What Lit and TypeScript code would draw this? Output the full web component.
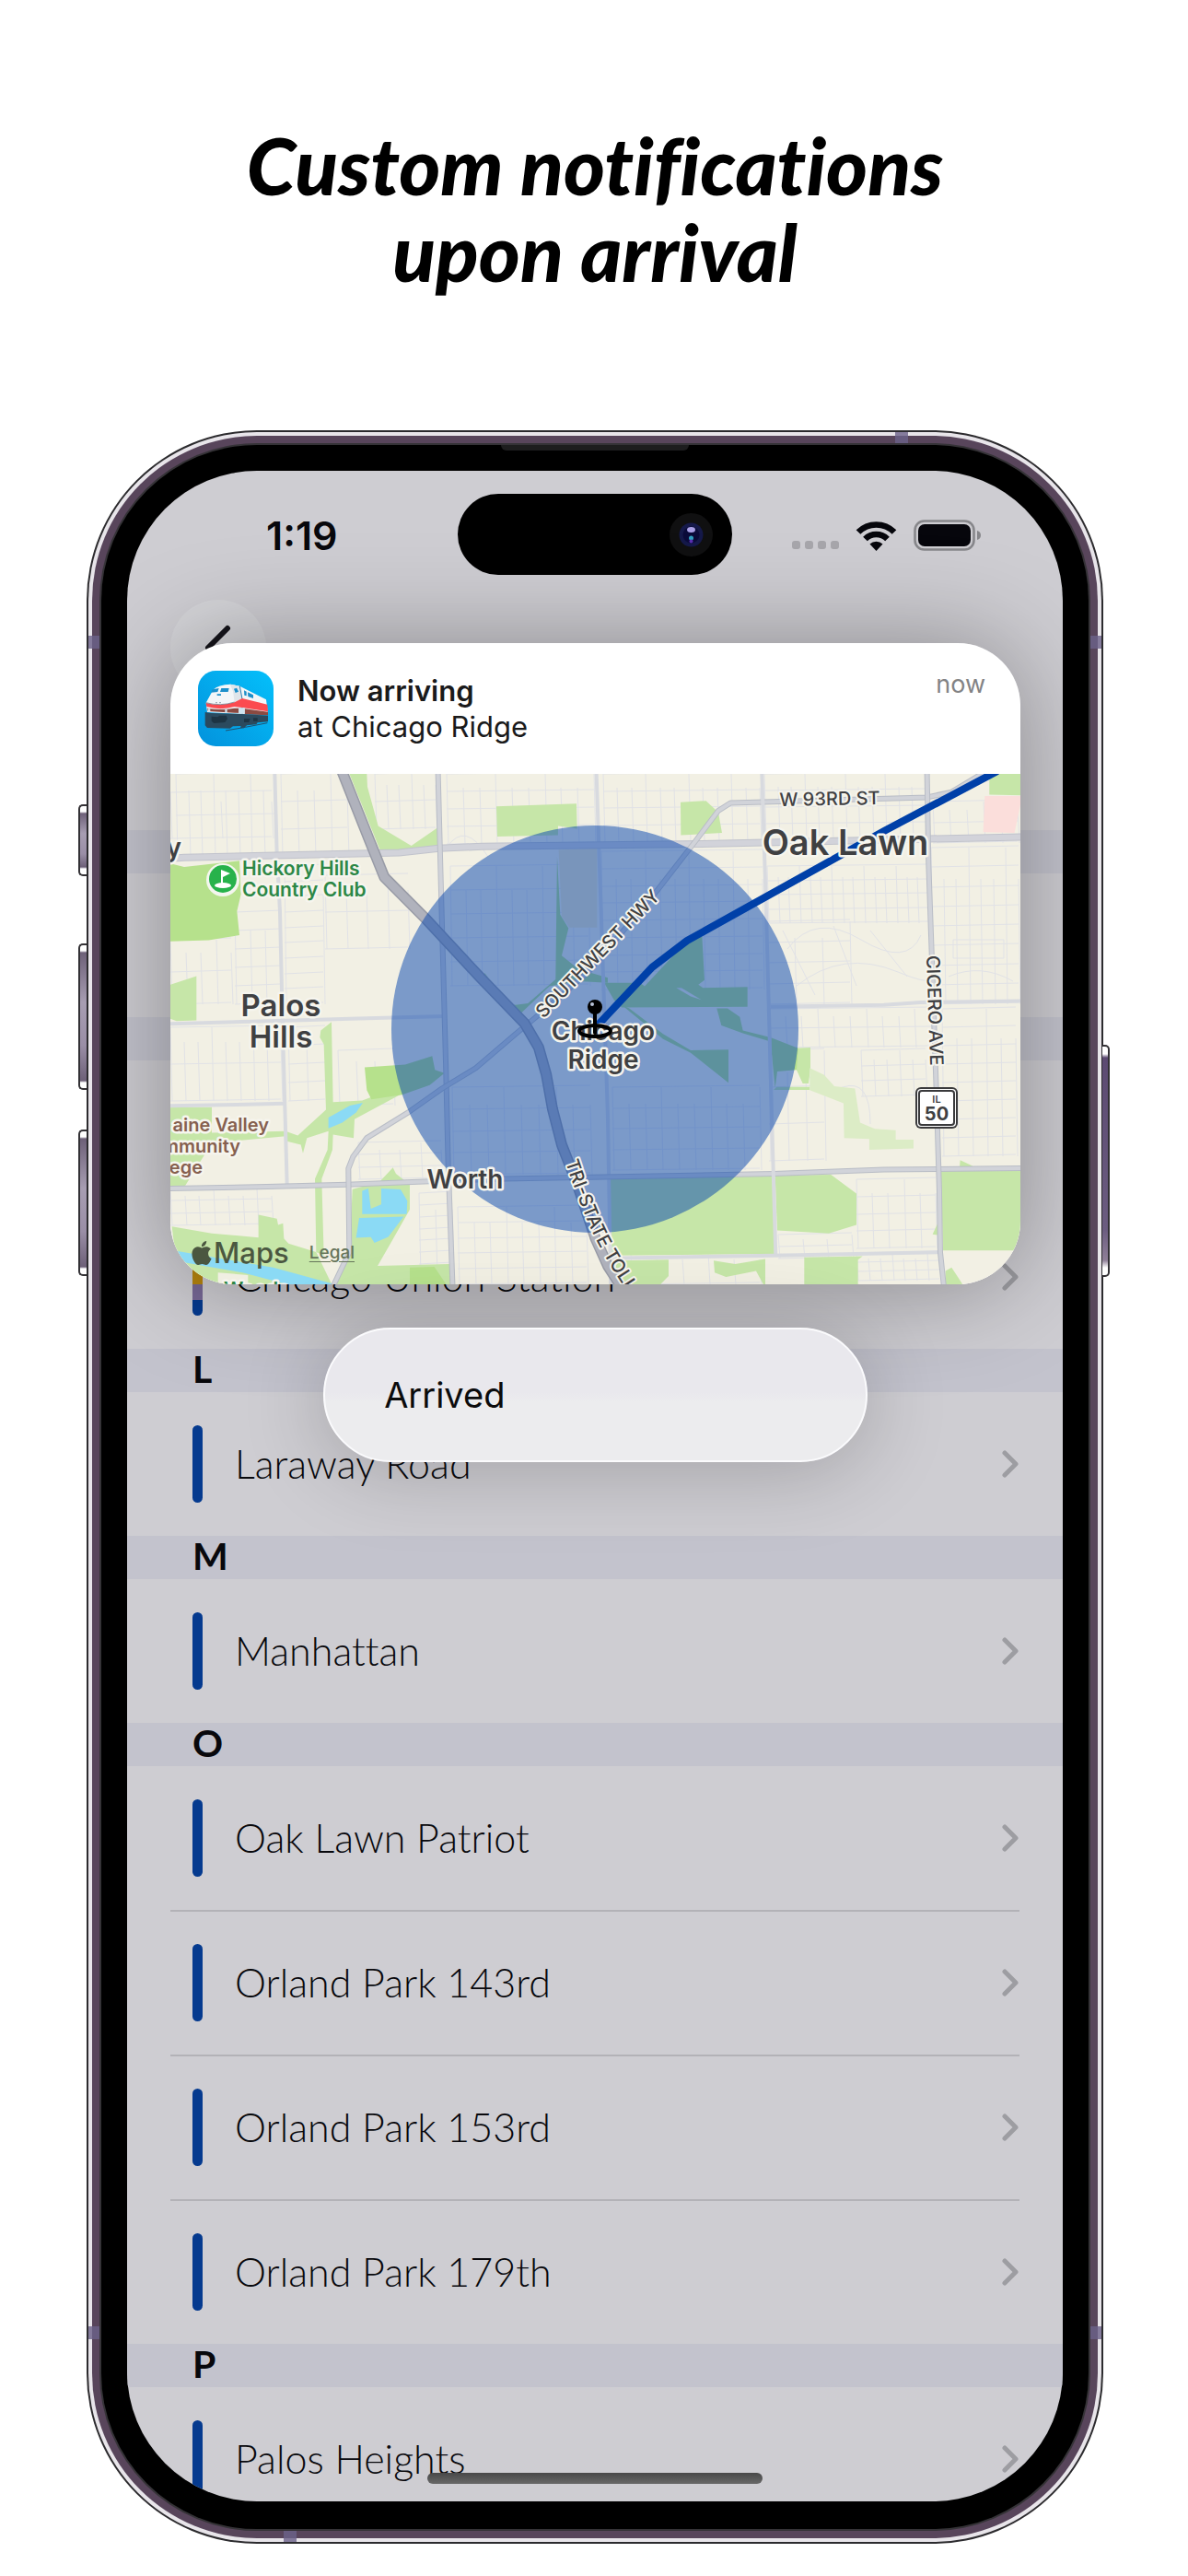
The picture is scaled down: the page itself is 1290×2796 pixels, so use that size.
import { LitElement, html, svg, css } from "lit";
import { customElement, property } from "lit/decorators.js";

interface Station {
  name: string;
  lines: string[];
}

interface Section {
  letter: string;
  stations: Station[];
}

const BLUE = "#053a8f";

const SECTIONS: Section[] = [
  { letter: "", stations: [{ name: "", lines: [BLUE] }] },
  {
    letter: "",
    stations: [
      { name: "", lines: [BLUE] },
      { name: "Chicago Union Station", lines: ["#b8860f", "#b8860f", "#b8860f", "#776896", BLUE] },
    ],
  },
  { letter: "L", stations: [{ name: "Laraway Road", lines: [BLUE] }] },
  { letter: "M", stations: [{ name: "Manhattan", lines: [BLUE] }] },
  {
    letter: "O",
    stations: [
      { name: "Oak Lawn Patriot", lines: [BLUE] },
      { name: "Orland Park 143rd", lines: [BLUE] },
      { name: "Orland Park 153rd", lines: [BLUE] },
      { name: "Orland Park 179th", lines: [BLUE] },
    ],
  },
  { letter: "P", stations: [{ name: "Palos Heights", lines: [BLUE] }] },
];

/* Residential streets: each block is [x, y, width, height, columns, rows]. */
const BLOCKS: number[][] = [
  [6, 0, 108, 90, 8, 2], [120, 0, 72, 90, 4, 3], [222, 0, 66, 60, 5, 2], [300, 0, 160, 76, 9, 4],
  [70, 150, 50, 100, 3, 5], [124, 100, 42, 150, 1, 9], [168, 110, 90, 80, 4, 2], [0, 180, 66, 70, 4, 2],
  [0, 275, 120, 80, 8, 2], [128, 275, 40, 80, 2, 4], [182, 300, 60, 60, 3, 1], [0, 450, 110, 40, 7, 3],
  [204, 400, 90, 40, 4, 3], [270, 455, 36, 90, 2, 7], [312, 470, 140, 84, 8, 5],
  [304, 100, 150, 130, 9, 5], [306, 340, 150, 95, 8, 4], [470, 0, 170, 74, 11, 4], [645, 0, 175, 72, 12, 4],
  [828, 30, 92, 45, 5, 2], [468, 84, 175, 150, 11, 8], [648, 100, 175, 62, 15, 4], [826, 80, 95, 170, 7, 8],
  [648, 160, 90, 90, 3, 4], [480, 340, 160, 90, 9, 4], [650, 255, 176, 42, 10, 2], [838, 255, 80, 160, 5, 8],
  [650, 300, 60, 120, 3, 3], [750, 300, 70, 50, 5, 3], [745, 440, 86, 75, 5, 4], [660, 500, 80, 26, 3, 2],
  [745, 520, 90, 30, 7, 3], [500, 520, 140, 34, 5, 1], [0, 20, 110, 50, 2, 1],
];

const streets = BLOCKS.map(([x, y, w, h, cols, rows]) => {
  let d = "";
  for (let i = 0; i <= cols; i++) {
    const px = Math.round(x + (w * i) / cols);
    const cut = (i * 7) % 3 === 0 ? 0 : Math.round(h / 5);
    d += `M${px} ${y + cut}L${px + 2} ${y + h}`;
  }
  for (let j = 0; j <= rows; j++) {
    const py = Math.round(y + (h * j) / rows);
    d += `M${x} ${py}L${x + w} ${py - 2}`;
  }
  return d;
}).join("");

const chevron = html`<svg class="chev" viewBox="0 0 18 30" aria-hidden="true">
  <path d="M3 3L15 15L3 27" fill="none" stroke="#9d9da2" stroke-width="5" stroke-linecap="round" stroke-linejoin="round" />
</svg>`;

@customElement("station-row")
class StationRow extends LitElement {
  @property({ attribute: false }) station!: Station;

  static styles = css`
    :host { display: block; }
    .row {
      display: flex; align-items: center; height: 156px; padding: 0 48px 0 71px;
      color: #08080c; text-decoration: none; font-variant-ligatures: none;
      font: 300 43px/52px Lato, "Liberation Sans", sans-serif;
    }
    .bar { display: flex; flex-direction: column; width: 11px; height: 84px; border-radius: 6px; overflow: hidden; margin-right: 35px; }
    .bar i { flex: 1; }
    .name { flex: 1; font-variant-ligatures: none; }
    .chev { width: 18px; height: 30px; }
  `;

  render() {
    return html`<a class="row" href="#">
      <span class="bar">${this.station.lines.map((c) => html`<i style="background:${c}"></i>`)}</span>
      <span class="name">${this.station.name}</span>
      ${chevron}
    </a>`;
  }
}

@customElement("arrival-map")
class ArrivalMap extends LitElement {
  static styles = css`
    :host { display: block; position: relative; overflow: hidden; }
    .map { display: block; width: 100%; height: auto; background: #f2f0e4; }
    .g path { fill: #c6e6a8; }
    .d path { fill: #b6e18c; }
    .w path { fill: #8bdaf5; }
    .road path, .street, .hwy path { fill: none; vector-effect: non-scaling-stroke; stroke-linejoin: round; }
    .street { stroke: #e1e2e6; stroke-width: 1px; }
    .road path { stroke: #d8dadf; stroke-width: 4px; }
    .road .main { stroke: #b9bdc6; stroke-width: 6px; }
    .road .fill { stroke: #d1d3d9; stroke-width: 4px; }
    .road .wide { stroke: #c1c3cc; stroke-width: 8px; }
    .road .widefill { stroke: #d2d3da; stroke-width: 6px; }
    .hwy .edge { stroke: #989ba6; stroke-width: 12px; }
    .hwy .core { stroke: #b0b2bc; stroke-width: 9px; }
    .route { fill: none; stroke: #0040a8; stroke-width: 8px; stroke-linejoin: round; }
    text {
      font-family: Inter, "Liberation Sans", sans-serif; fill: #3f4042; stroke: #f6f5ee;
      stroke-width: 5px; paint-order: stroke; stroke-linejoin: round;
    }
    .city { font-size: 38px; font-weight: 600; }
    .town { font-size: 33px; font-weight: 600; }
    .village { font-size: 28px; font-weight: 600; }
    .club { font-size: 21px; font-weight: 600; fill: #2c8746; }
    .school { font-size: 20px; font-weight: 600; fill: #86604f; }
    .way { font-size: 20px; font-weight: 500; stroke-width: 4px; }
    .mid { text-anchor: middle; }
    .end { text-anchor: end; }
    .il { font-size: 11px; font-weight: 600; stroke: none; }
    .num { font-size: 20px; font-weight: 700; stroke: none; }
    .credit {
      position: absolute; left: 23px; bottom: 16px; display: flex; align-items: center;
      font: 500 31px/36px Inter, "Liberation Sans", sans-serif; color: #4b5740;
    }
    .apple { width: 22px; height: 26px; margin-right: 2px; fill: #4b5740; }
    .legal { font-size: 19px; font-weight: 500; color: #66755a; margin-left: 22px; text-underline-offset: 3px; }
  `;

  render() {
    return html`
      <svg class="map" viewBox="0 0 923 554" role="img" aria-label="Map">
        <path class="street" d=${streets} />
        <path class="street" d="M670 190Q700 150 750 180T815 175M680 230Q730 190 790 215T820 200M665 170L700 240M720 165L745 230M760 170L800 220M850 180H905V200H850ZM845 220Q880 205 915 225M690 320Q700 350 730 340T760 380M300 80Q320 50 345 90" />
        <g transform="translate(-5 -10) scale(.3333 .37)">
          <g class="g">
            <path d="M598 26H655L657 65L692 180L800 238L885 185L890 245L700 255Z" />
            <path d="M1077 122L1338 114L1340 188L1278 180V207L1080 211Z" />
            <path d="M15 645L100 620V750L35 752L15 745Z" />
            <path d="M15 1005H150V1080L390 1075L430 1088L522 1012L515 820L502 800L505 780L540 755L545 990L640 985L670 975L660 960L770 965L615 1040L612 1095L545 1085L543 1130L508 1215L515 1440L490 1430L486 1215L527 1130L530 1075L460 1095L447 1140L440 1115L395 1105L390 1090L150 1110L60 1240H15Z" />
            <path d="M20 1355L150 1375L302 1387V1320L362 1332L366 1350L382 1345L385 1390L400 1405L490 1430L540 1523V1540H100L30 1430Z" />
            <path d="M608 1245L695 1225L740 1182L750 1200L795 1232V1305L735 1400L690 1470L925 1465L930 1540H540L600 1420Z" />
          </g>
          <g class="d">
            <path d="M15 290L60 300L240 282L245 380L232 430L240 500L140 515L15 518Z" />
            <path d="M648 888L780 880L868 855L877 895L908 905L860 940L770 968L670 982L655 955Z" />
            <path d="M1275 270L1285 440L1312 480L1290 560L1345 600L1440 625V640L1345 635L1250 650L1150 735L1105 700L1140 705L1180 700L1270 630Z" />
            <path d="M1025 615L1040 612L1110 700L1100 712Z" />
            <path d="M795 1475L875 1473L925 1540H795Z" />
          </g>
          <path d="M1280 250L1405 245V478H1315L1290 445Z" fill="#efe7c8" />
          <g class="w">
            <path d="M530 1035L600 1000L642 992L620 1020L575 1050L530 1067Z" />
            <path d="M640 1250L660 1243L668 1303L702 1290V1243L765 1246L787 1280L785 1318H640Z" />
            <path d="M630 1330L775 1326L725 1385L680 1403L668 1386L620 1388Z" />
            <path d="M30 1426L200 1452L350 1475L545 1523L540 1535H440L250 1490L60 1460Z" />
          </g>
          <path d="M170 1490L268 1497V1540H170Z" fill="#f0efe2" />
        </g>
        <g transform="translate(455 -10) scale(.3333 .37)">
          <g class="g">
            <path d="M297 110L380 106L420 140L432 200L298 207Z" />
            <path d="M1303 26H1410V90L1303 88Z" />
            <path d="M670 832L720 830L720 890L714 935H695L675 895Z" />
            <path d="M65 1210L598 1205L605 1435L70 1440Z" />
            <path d="M605 1205L787 1203L870 1258V1350L780 1375L612 1366Z" />
            <path d="M1145 1192L1410 1190V1425H1152Z" />
            <path d="M1208 1160L1250 1178L1206 1182Z" />
            <path d="M1135 1345L1118 1378L1137 1380Z" />
            <path d="M90 1455L258 1452V1500L220 1535H75Z" />
            <path d="M405 1455L475 1465L573 1450V1535L543 1485L445 1503L408 1490Z" />
            <path d="M700 1445L890 1442L875 1452V1540H700Z" />
            <path d="M1160 1485L1180 1475L1220 1530H1160Z" />
            <path d="M610 945H718V954H600Z" />
          </g>
          <g class="d">
            <path d="M175 655L320 515L367 503L375 632L355 645L370 655L515 652V710L105 712L80 690L48 640L165 640L180 650L250 637L330 680L365 690L300 655Z" />
            <path d="M415 715L450 715L490 740L500 780L590 800L680 832L675 895L612 900L605 948L590 812L500 788L430 765Z" />
            <path d="M130 715L240 790L330 838L453 836V933L330 845L240 805L105 705Z" />
          </g>
          <path d="M1288 92H1410L1385 200L1283 198Z" fill="#fbdedb" />
          <path d="M718 890L765 910L798 943L865 950L882 1050L930 1068L998 1072V1100H1056V1126L912 1130V1098L830 1095L828 993L718 955Z" fill="#dcecc6" />
        </g>
        <g class="road">
          <g transform="translate(-5 -10) scale(.3333 .37)">
            <path d="M355 26L362 260L372 430L380 740L395 1230" />
            <path d="M15 760L420 750L600 745L910 738" />
            <path d="M15 1001L230 997L385 994" />
            <path d="M1403 26L1420 480L1440 1030L1450 1540" />
            <path class="wide" d="M10 275L60 272L560 262L760 258L890 245L1030 240L1780 232L2260 222L2790 212" />
            <path class="widefill" d="M10 275L60 272L560 262L760 258L890 245L1030 240L1780 232L2260 222L2790 212" />
            <path class="main" d="M887 26L900 470L913 900L920 1170L935 1540" />
            <path class="fill" d="M887 26L900 470L913 900L920 1170L935 1540" />
            <path class="main" d="M10 1243L330 1238L590 1232L860 1222L1100 1215L1980 1200L2340 1188L2790 1184" />
            <path class="fill" d="M10 1243L330 1238L590 1232L860 1222L1100 1215L1980 1200L2340 1188L2790 1184" />
            <path class="main" d="M540 1540L598 1430L595 1185L610 1150L655 1095L790 1020L900 950L1010 890L1140 790L1260 700L1380 605L1600 370L1725 225L1800 135L1840 112L2480 96L2560 80L2660 26" />
            <path class="fill" d="M540 1540L598 1430L595 1185L610 1150L655 1095L790 1020L900 950L1010 890L1140 790L1260 700L1380 605L1600 370L1725 225L1800 135L1840 112L2480 96L2560 80L2660 26" />
          </g>
          <g transform="translate(455 -10) scale(.3333 .37)">
            <path d="M562 26L575 400L595 1060L607 1440" />
            <path d="M590 710L960 705L1080 697L1410 693" />
            <path d="M60 1448L600 1440L1143 1430" />
            <path class="main" d="M1100 26L1105 290L1117 600L1130 950L1140 1250L1143 1430L1156 1540" />
            <path class="fill" d="M1100 26L1105 290L1117 600L1130 950L1140 1250L1143 1430L1156 1540" />
          </g>
        </g>
        <g class="hwy" transform="translate(-5 -10) scale(.3333 .37)">
          <path class="edge" d="M570 10L665 225L712 330L850 455L1020 620L1170 760L1215 830L1240 910L1260 1010L1290 1115L1340 1230L1400 1390L1440 1470L1490 1540" />
          <path class="core" d="M570 10L665 225L712 330L850 455L1020 620L1170 760L1215 830L1240 910L1260 1010L1290 1115L1340 1230L1400 1390L1440 1470L1490 1540" />
        </g>
        <circle cx="461" cy="277" r="221" fill="#0443ad" fill-opacity=".5" />
        <path class="route" d="M461 276L523 210L561 181L775 62L898 -3" />

        <text class="city mid" x="733" y="88">Oak Lawn</text>
        <text class="town mid" x="120" y="263">Palos</text>
        <text class="town mid" x="120" y="297">Hills</text>
        <text class="village mid" x="470" y="289">Chicago</text>
        <text class="village mid" x="470" y="320">Ridge</text>
        <text class="village mid" x="320" y="450">Worth</text>
        <text class="village end" x="12" y="90">y</text>
        <text class="club" x="78" y="110">Hickory Hills</text>
        <text class="club" x="78" y="133">Country Club</text>
        <text class="club" x="58" y="567">Woods</text>
        <text class="school end" x="107" y="388">aine Valley</text>
        <text class="school end" x="76" y="411">mmunity</text>
        <text class="school end" x="35" y="434">ege</text>
        <text class="way mid" transform="translate(716 34) rotate(-1)">W 93RD ST</text>
        <text class="way mid" transform="translate(823 257) rotate(88)">CICERO AVE</text>
        <text class="way mid" transform="translate(469 200) rotate(-46)">SOUTHWEST HWY</text>
        <path id="tri" d="M429 421Q440 455 455 490T505 575" fill="none" />
        <text class="way"><textPath href="#tri">TRI-STATE TOLL</textPath></text>

        <circle cx="57" cy="115" r="18" fill="#f4f6ee" />
        <circle cx="57" cy="114" r="15" fill="#27b24b" />
        <path d="M55 104L65 108L57 112V120H55Z" fill="#fff" />
        <ellipse cx="57" cy="121" rx="9" ry="3" fill="#fff" />

        <rect x="809" y="340" width="46" height="45" rx="6" fill="#3a3a3c" />
        <rect x="811" y="342" width="42" height="41" rx="4" fill="#fff" />
        <rect x="813" y="344" width="38" height="37" rx="3" fill="none" stroke="#3a3a3c" stroke-width="2" />
        <text class="il mid" x="832" y="357">IL</text>
        <text class="num mid" x="832" y="376">50</text>

        <ellipse cx="461" cy="279" rx="17" ry="6" fill="none" stroke="#000" stroke-width="4" />
        <path d="M461 254V281" stroke="#000" stroke-width="4" stroke-linecap="round" />
        <circle cx="461" cy="253" r="8" fill="#000" />
        <circle cx="458" cy="250" r="2" fill="#b9c3d8" />
      </svg>
      <div class="credit">
        <svg class="apple" viewBox="2 0 20 24" aria-hidden="true"><path d="M12.152 6.896c-.948 0-2.415-1.078-3.96-1.04-2.04.027-3.91 1.183-4.961 3.014-2.117 3.675-.546 9.103 1.519 12.09 1.013 1.454 2.208 3.09 3.792 3.039 1.52-.065 2.09-.987 3.935-.987 1.831 0 2.35.987 3.96.948 1.637-.026 2.676-1.48 3.676-2.948 1.156-1.688 1.636-3.325 1.662-3.415-.039-.013-3.182-1.221-3.22-4.857-.026-3.04 2.48-4.494 2.597-4.559-1.429-2.09-3.623-2.324-4.39-2.376-2-.156-3.675 1.09-4.61 1.09zM15.53 3.83c.843-1.012 1.4-2.427 1.245-3.83-1.207.052-2.662.805-3.532 1.818-.78.896-1.454 2.338-1.273 3.714 1.338.104 2.715-.688 3.559-1.701" /></svg>
        <span>Maps</span>
        <a class="legal" href="#">Legal</a>
      </div>
    `;
  }
}

@customElement("app-root")
class AppRoot extends LitElement {
  static styles = css`
    :host { display: block; background: #fff; font-family: Inter, "Liberation Sans", sans-serif; }
    .page { padding: 132px 108px 51px 110px; overflow: hidden; }
    h1 {
      margin: 0 0 163px; text-align: center; color: #000;
      font: italic 900 86px/94px Lato, "Open Sans", sans-serif; font-variant-ligatures: none;
    }

    .phone {
      position: relative; background: #000; border-radius: 169px; padding: 28px 28px 30px;
      box-shadow: 0 0 0 2px #353337, 0 0 0 10px #58455b, 0 0 0 14px #e8e5ea, 0 0 0 16px #2c2b2e;
    }
    .key {
      position: absolute; left: -25px; width: 9px; box-sizing: border-box;
      border: 2px solid #333135; border-right: 0; border-radius: 5px 0 0 5px;
      background: linear-gradient(#fff 0, #fff 6px, #6d6078 8px, #a79db2 40%, #9a8ea6 70%, #6d6078 calc(100% - 8px), #fff calc(100% - 6px));
    }
    .key.mute { top: 390px; height: 78px; }
    .key.up { top: 541px; height: 159px; }
    .key.down { top: 743px; height: 159px; }
    .key.power {
      top: 651px; height: 252px; left: auto; right: -23px; width: 8px;
      border: 2px solid #333135; border-left: 0; border-radius: 0 5px 5px 0;
      background: linear-gradient(#fff 0, #fff 8px, #5c4a72 12px, #6b5c80 80%, #8f7f98 calc(100% - 16px), #fff calc(100% - 8px));
    }
    .band { position: absolute; width: 12px; height: 14px; background: #6b618a; opacity: .8; }
    .band.lt { left: -14px; top: 207px; }
    .band.rt { right: -14px; top: 207px; }
    .band.lb { left: -14px; bottom: 206px; }
    .band.rb { right: -14px; bottom: 206px; }
    .band.top { top: -14px; right: 196px; width: 14px; height: 12px; }
    .band.bottom { bottom: -14px; left: 198px; width: 14px; height: 12px; }
    .speaker { position: absolute; top: 0; left: 50%; width: 204px; height: 6px; margin-left: -102px; border-radius: 0 0 6px 6px; background: #1d1d1e; }

    .screen {
      position: relative; overflow: hidden; border-radius: 141px; aspect-ratio: 1016 / 2204;
      background: #cecdd2; color: #08080c;
    }
    .status { display: flex; align-items: center; height: 140px; padding: 0 88px 0 151px; }
    .time { flex: 1; font-size: 43px; font-weight: 600; line-height: 50px; }
    .dots { display: flex; gap: 5px; margin: 20px 18px 0 0; }
    .dots i { width: 9px; height: 9px; border-radius: 3px; background: #a7a6ab; }
    .wifi { width: 45px; height: 33px; margin-right: 18px; }
    .battery { width: 74px; height: 34px; }
    .island {
      position: absolute; top: 25px; left: 50%; margin-left: -149px; width: 298px; height: 88px; box-sizing: border-box;
      border-radius: 44px; background: #000; display: flex; align-items: center; justify-content: flex-end; padding-right: 21px;
    }
    .camera { width: 47px; height: 47px; }

    .nav { height: 250px; padding-left: 47px; }
    .back { display: grid; place-items: center; width: 104px; height: 104px; padding: 0; border: 0; border-radius: 50%; background: #d4d4d8; }
    .back svg { width: 30px; height: 50px; }

    .section h2 { margin: 0; height: 47px; padding: 0 0 0 71px; background: #c3c3cd; font: 700 41px/44px Lato, "Liberation Sans", sans-serif; }
    .rule { height: 2px; margin: 0 47px -1px; background: #b3b2b7; }

    .overlay { position: absolute; top: 187px; left: 47px; right: 46px; display: flex; flex-direction: column; align-items: center; gap: 47px; }
    .card { align-self: stretch; position: relative; z-index: 1; border-radius: 68px; overflow: hidden; background: #fff; }
    .shade { position: absolute; inset: 0 0 193px; border-radius: 68px; box-shadow: 0 2px 110px rgba(0, 0, 0, .34); }
    .head { display: flex; align-items: center; height: 142px; padding: 0 38px 0 30px; box-sizing: border-box; }
    .app { width: 82px; height: 82px; margin-right: 26px; }
    .msg { flex: 1; font-size: 31px; line-height: 39px; color: #1a1a1b; }
    .msg b { display: block; font-weight: 600; }
    .msg span { display: block; }
    .when { align-self: flex-start; margin-top: 28px; font-size: 27px; line-height: 34px; color: #838385; }
    .action {
      position: relative; z-index: 1;
      width: 64%; height: 146px; padding: 0 64px; border: 2px solid #fbfbfd; border-radius: 73px; text-align: left;
      background: linear-gradient(#e9e8ed 48%, #ececee 56%);
      box-shadow: 0 8px 90px rgba(0, 0, 0, .22);
      color: #0b0b0c; font: 400 38px/48px Inter, "Liberation Sans", sans-serif;
    }
    .home { position: absolute; left: 50%; bottom: 19px; width: 364px; height: 12px; margin-left: -182px; border-radius: 6px; background: linear-gradient(#484848, #686868); }
  `;

  private trainIcon() {
    return html`<svg class="app" viewBox="46 84 246 246" aria-hidden="true">
      <defs><linearGradient id="sky" x1="0" y1="1" x2="1" y2="0"><stop offset="0" stop-color="#0392dc" /><stop offset="1" stop-color="#04c0fb" /></linearGradient></defs>
      ${svg`<rect x="46" y="84" width="246" height="246" rx="58" fill="url(#sky)" />
      <path d="M82 170L95 146Q112 129 152 128L182 134L268 178L274 225L190 225L76 219L72 188Z" fill="#f3f6f8" />
      <path d="M150 128L182 134L190 176L165 186L160 150Z" fill="#dfe5ea" />
      <path d="M93 145L114 141L110 153L88 155ZM122 141H147L144 153H118ZM108 160H121V165H108Z" fill="#1c8fca" />
      <path d="M163 143L172 140L178 152L168 156ZM196 148L204 152V166L197 164ZM208 154L226 163V174L209 168Z" fill="#1c8fca" />
      <path d="M182 134L190 176V225" fill="none" stroke="#2a7fb0" stroke-width="3" />
      <path d="M72 189Q120 202 165 187L190 174L272 194L274 217L190 204L165 201Q120 214 74 201Z" fill="#fb4b50" />
      <path d="M72 188Q120 201 165 186" fill="none" stroke="#5a6c7c" stroke-width="2" />
      <path d="M76 206Q120 214 165 206L190 206V222L165 221L78 216ZM198 208L274 218V229L198 226Z" fill="#8a4a42" />
      <path d="M78 208H86V218H78ZM134 210H141V221H134ZM178 205H198V224H178Z" fill="#cfe3ee" />
      <path d="M69 219L90 222L190 225L274 230V250L240 253L236 259L205 262L196 271L184 271L186 264L160 265L150 272L76 270L69 262Z" fill="#2b4a5e" />
      <path d="M90 233L110 235L116 230H138L142 240L134 252L98 255L90 248ZM196 240H216L212 252H196ZM226 238H240V248H226Z" fill="#1d3443" />
      <path d="M136 279L200 268L272 254" fill="none" stroke="#21506e" stroke-width="3" />
      <circle cx="106" cy="188" r="2" fill="#5a6c7c" /><circle cx="118" cy="188" r="2" fill="#5a6c7c" />`}
    </svg>`;
  }

  render() {
    return html`<main class="page">
      <h1>Custom notifications<br />upon arrival</h1>
      <div class="phone">
        <i class="key mute"></i><i class="key up"></i><i class="key down"></i><i class="key power"></i>
        <i class="band lt"></i><i class="band rt"></i><i class="band lb"></i><i class="band rb"></i><i class="band top"></i><i class="band bottom"></i>
        <i class="speaker"></i>
        <div class="screen">
          <div class="status">
            <span class="time">1:19</span>
            <span class="dots"><i></i><i></i><i></i><i></i></span>
            <svg class="wifi" viewBox="0 0 45 33" aria-hidden="true">
              <path d="M3 12.500A27.600 27.600 0 0 1 42 12.500M10.500 20A17 17 0 0 1 34.500 20" fill="none" stroke="#06060c" stroke-width="6.600" />
              <path d="M22.500 33L15.500 25.500A10 10 0 0 1 29.500 25.500Z" fill="#06060c" />
            </svg>
            <svg class="battery" viewBox="0 0 74 34" aria-hidden="true">
              <rect x="1.500" y="1.500" width="64" height="31" rx="10" fill="none" stroke="#87878b" stroke-width="2.600" />
              <rect x="5" y="5" width="57" height="24" rx="7" fill="#06060c" />
              <path d="M69 12Q73 13 73 17T69 22Z" fill="#87878b" />
            </svg>
          </div>
          <div class="island">
            <svg class="camera" viewBox="0 0 47 47" aria-hidden="true">
              <circle cx="23.500" cy="23.500" r="23.500" fill="#101011" />
              <circle cx="23.500" cy="23.500" r="13" fill="#15194a" />
              <circle cx="23.500" cy="23.500" r="9" fill="#0b0b3a" />
              <ellipse cx="23.500" cy="18" rx="4.500" ry="3" fill="#a9a0e6" />
              <circle cx="23.500" cy="27" r="2.500" fill="#2f9fc0" />
              <circle cx="23.500" cy="30.500" r="2" fill="#5a2fb0" />
            </svg>
          </div>
          <div class="nav">
            <button class="back" aria-label="Back">
              <svg viewBox="0 0 30 50"><path d="M25 4L4 25L25 46" fill="none" stroke="#16151b" stroke-width="6" stroke-linecap="round" stroke-linejoin="round" /></svg>
            </button>
          </div>
          ${SECTIONS.map(
            (s) => html`<section class="section">
              <h2>${s.letter}</h2>
              ${s.stations.map(
                (st, i) => html`${i ? html`<div class="rule"></div>` : ""}<station-row .station=${st}></station-row>`
              )}
            </section>`
          )}
          <div class="overlay">
            <i class="shade"></i>
            <article class="card">
              <header class="head">
                ${this.trainIcon()}
                <div class="msg"><b>Now arriving</b><span>at Chicago Ridge</span></div>
                <span class="when">now</span>
              </header>
              <arrival-map></arrival-map>
            </article>
            <button class="action">Arrived</button>
          </div>
          <i class="home"></i>
        </div>
      </div>
    </main>`;
  }
}
